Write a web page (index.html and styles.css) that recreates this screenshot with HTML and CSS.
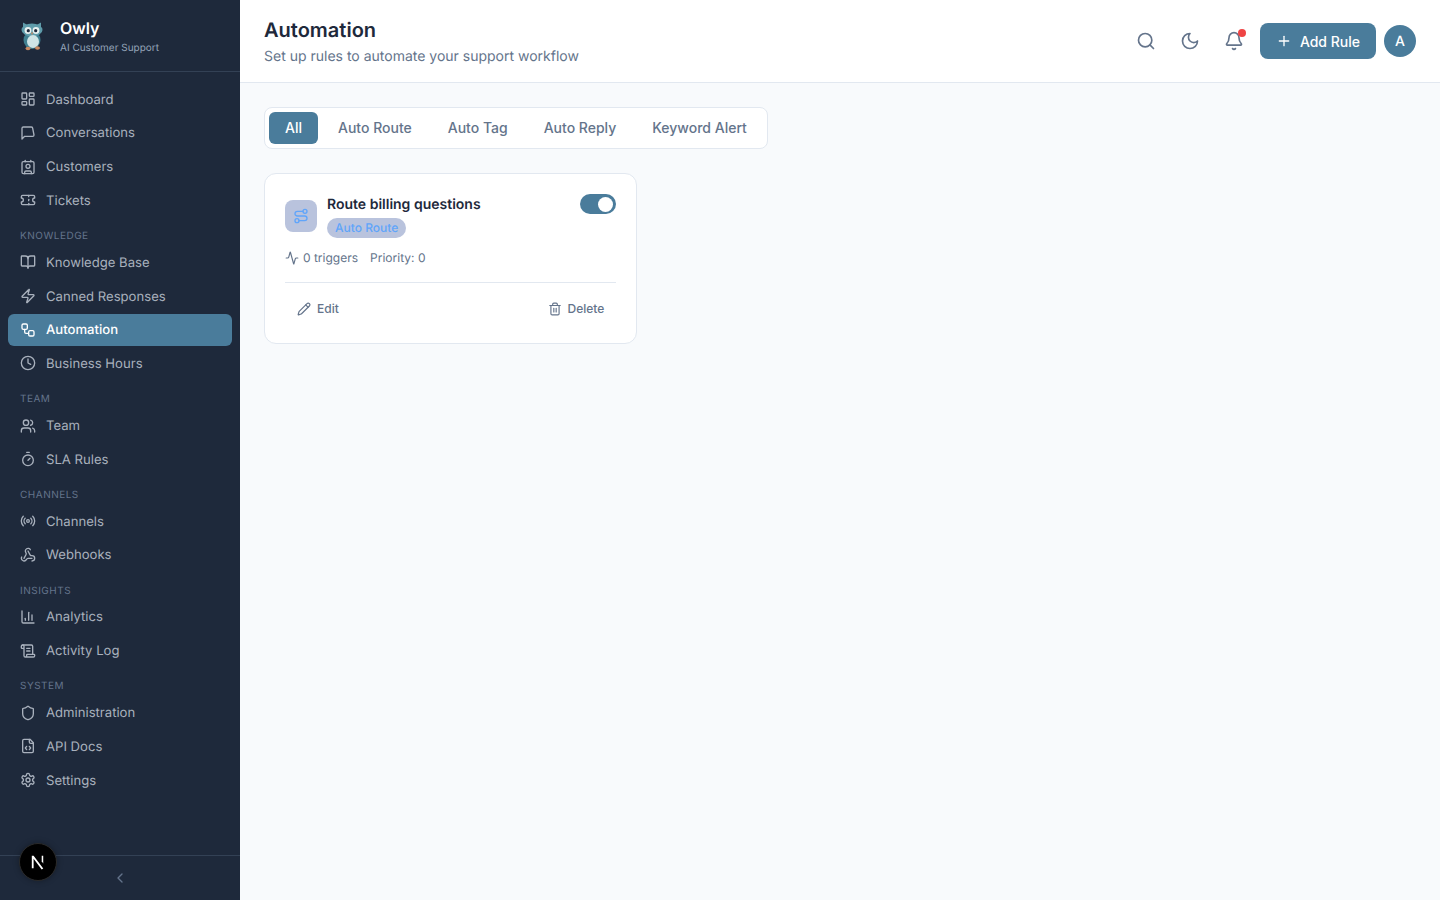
FILE: index.html
```html
<!DOCTYPE html>
<html lang="en">
<head>
<meta charset="utf-8">
<title>Automation - Owly</title>
<link rel="stylesheet" href="styles.css">
</head>
<body>
<svg class="sprite" xmlns="http://www.w3.org/2000/svg">
<symbol id="i-dashboard" viewBox="0 0 24 24"><rect width="7" height="9" x="3" y="3" rx="1"/><rect width="7" height="5" x="14" y="3" rx="1"/><rect width="7" height="9" x="14" y="12" rx="1"/><rect width="7" height="5" x="3" y="16" rx="1"/></symbol>
<symbol id="i-message" viewBox="0 0 24 24"><path d="M21 15a2 2 0 0 1-2 2H7l-4 4V5a2 2 0 0 1 2-2h12a2 2 0 0 1 2 2z"/></symbol>
<symbol id="i-contact" viewBox="0 0 24 24"><path d="M16 2v2"/><path d="M7 22v-2a2 2 0 0 1 2-2h6a2 2 0 0 1 2 2v2"/><path d="M8 2v2"/><circle cx="12" cy="11" r="3"/><rect x="3" y="4" width="18" height="18" rx="2"/></symbol>
<symbol id="i-ticket" viewBox="0 0 24 24"><path d="M2 9a3 3 0 0 1 0 6v2a2 2 0 0 0 2 2h16a2 2 0 0 0 2-2v-2a3 3 0 0 1 0-6V7a2 2 0 0 0-2-2H4a2 2 0 0 0-2 2Z"/><path d="M13 5v2"/><path d="M13 17v2"/><path d="M13 11v2"/></symbol>
<symbol id="i-book" viewBox="0 0 24 24"><path d="M12 7v14"/><path d="M3 18a1 1 0 0 1-1-1V4a1 1 0 0 1 1-1h5a4 4 0 0 1 4 4 4 4 0 0 1 4-4h5a1 1 0 0 1 1 1v13a1 1 0 0 1-1 1h-6a3 3 0 0 0-3 3 3 3 0 0 0-3-3z"/></symbol>
<symbol id="i-zap" viewBox="0 0 24 24"><path d="M4 14a1 1 0 0 1-.78-1.63l9.9-10.2a.5.5 0 0 1 .86.46l-1.92 6.02A1 1 0 0 0 13 10h7a1 1 0 0 1 .78 1.63l-9.9 10.2a.5.5 0 0 1-.86-.46l1.92-6.02A1 1 0 0 0 11 14z"/></symbol>
<symbol id="i-workflow" viewBox="0 0 24 24"><rect width="8" height="8" x="3" y="3" rx="2"/><path d="M7 11v4a2 2 0 0 0 2 2h4"/><rect width="8" height="8" x="13" y="13" rx="2"/></symbol>
<symbol id="i-clock" viewBox="0 0 24 24"><circle cx="12" cy="12" r="10"/><polyline points="12 6 12 12 16 14"/></symbol>
<symbol id="i-users" viewBox="0 0 24 24"><path d="M16 21v-2a4 4 0 0 0-4-4H6a4 4 0 0 0-4 4v2"/><circle cx="9" cy="7" r="4"/><path d="M22 21v-2a4 4 0 0 0-3-3.87"/><path d="M16 3.13a4 4 0 0 1 0 7.75"/></symbol>
<symbol id="i-timer" viewBox="0 0 24 24"><line x1="10" x2="14" y1="2" y2="2"/><line x1="12" x2="15" y1="14" y2="11"/><circle cx="12" cy="14" r="8"/></symbol>
<symbol id="i-radio" viewBox="0 0 24 24"><path d="M4.9 19.1C1 15.2 1 8.8 4.9 4.9"/><path d="M7.8 16.2c-2.3-2.3-2.3-6.1 0-8.5"/><circle cx="12" cy="12" r="2"/><path d="M16.2 7.8c2.3 2.3 2.3 6.1 0 8.5"/><path d="M19.1 4.9C23 8.8 23 15.1 19.1 19"/></symbol>
<symbol id="i-webhook" viewBox="0 0 24 24"><path d="M18 16.98h-5.99c-1.1 0-1.95.94-2.48 1.9A4 4 0 0 1 2 17c.01-.7.2-1.4.57-2"/><path d="m6 17 3.13-5.78c.53-.97.1-2.18-.5-3.1a4 4 0 1 1 6.89-4.06"/><path d="m12 6 3.13 5.73C15.66 12.7 16.9 13 18 13a4 4 0 0 1 0 8"/></symbol>
<symbol id="i-chart" viewBox="0 0 24 24"><path d="M3 3v16a2 2 0 0 0 2 2h16"/><path d="M18 17V9"/><path d="M13 17V5"/><path d="M8 17v-3"/></symbol>
<symbol id="i-scroll" viewBox="0 0 24 24"><path d="M15 12h-5"/><path d="M15 8h-5"/><path d="M19 17V5a2 2 0 0 0-2-2H4"/><path d="M8 21h12a2 2 0 0 0 2-2v-1a1 1 0 0 0-1-1H11a1 1 0 0 0-1 1v1a2 2 0 1 1-4 0V5a2 2 0 1 0-4 0v2a1 1 0 0 0 1 1h3"/></symbol>
<symbol id="i-shield" viewBox="0 0 24 24"><path d="M20 13c0 5-3.5 7.5-7.66 8.95a1 1 0 0 1-.67-.01C7.5 20.5 4 18 4 13V6a1 1 0 0 1 1-1c2 0 4.5-1.2 6.24-2.72a1.17 1.17 0 0 1 1.52 0C14.51 3.81 17 5 19 5a1 1 0 0 1 1 1z"/></symbol>
<symbol id="i-filecode" viewBox="0 0 24 24"><path d="M10 12.5 8 15l2 2.5"/><path d="m14 12.5 2 2.5-2 2.5"/><path d="M14 2v4a2 2 0 0 0 2 2h4"/><path d="M15 2H6a2 2 0 0 0-2 2v16a2 2 0 0 0 2 2h12a2 2 0 0 0 2-2V7z"/></symbol>
<symbol id="i-settings" viewBox="0 0 24 24"><path d="M12.22 2h-.44a2 2 0 0 0-2 2v.18a2 2 0 0 1-1 1.73l-.43.25a2 2 0 0 1-2 0l-.15-.08a2 2 0 0 0-2.73.73l-.22.38a2 2 0 0 0 .73 2.73l.15.1a2 2 0 0 1 1 1.72v.51a2 2 0 0 1-1 1.74l-.15.09a2 2 0 0 0-.73 2.73l.22.38a2 2 0 0 0 2.73.73l.15-.08a2 2 0 0 1 2 0l.43.25a2 2 0 0 1 1 1.73V20a2 2 0 0 0 2 2h.44a2 2 0 0 0 2-2v-.18a2 2 0 0 1 1-1.73l.43-.25a2 2 0 0 1 2 0l.15.08a2 2 0 0 0 2.73-.73l.22-.39a2 2 0 0 0-.73-2.73l-.15-.08a2 2 0 0 1-1-1.74v-.5a2 2 0 0 1 1-1.74l.15-.09a2 2 0 0 0 .73-2.73l-.22-.38a2 2 0 0 0-2.73-.73l-.15.08a2 2 0 0 1-2 0l-.43-.25a2 2 0 0 1-1-1.73V4a2 2 0 0 0-2-2z"/><circle cx="12" cy="12" r="3"/></symbol>
<symbol id="i-search" viewBox="0 0 24 24"><circle cx="11" cy="11" r="8"/><path d="m21 21-4.3-4.3"/></symbol>
<symbol id="i-moon" viewBox="0 0 24 24"><path d="M12 3a6 6 0 0 0 9 9 9 9 0 1 1-9-9Z"/></symbol>
<symbol id="i-bell" viewBox="0 0 24 24"><path d="M10.268 21a2 2 0 0 0 3.464 0"/><path d="M3.262 15.326A1 1 0 0 0 4 17h16a1 1 0 0 0 .74-1.673C19.41 13.956 18 12.499 18 8A6 6 0 0 0 6 8c0 4.499-1.411 5.956-2.738 7.326"/></symbol>
<symbol id="i-plus" viewBox="0 0 24 24"><path d="M5 12h14"/><path d="M12 5v14"/></symbol>
<symbol id="i-route" viewBox="0 0 24 24"><circle cx="6" cy="19" r="3"/><path d="M9 19h8.5a3.5 3.5 0 0 0 0-7h-11a3.5 3.5 0 0 1 0-7H15"/><circle cx="18" cy="5" r="3"/></symbol>
<symbol id="i-activity" viewBox="0 0 24 24"><path d="M22 12h-2.48a2 2 0 0 0-1.93 1.46l-2.35 8.36a.25.25 0 0 1-.48 0L9.24 2.18a.25.25 0 0 0-.48 0l-2.35 8.36A2 2 0 0 1 4.49 12H2"/></symbol>
<symbol id="i-pencil" viewBox="0 0 24 24"><path d="M21.174 6.812a1 1 0 0 0-3.986-3.987L3.842 16.174a2 2 0 0 0-.5.83l-1.321 4.352a.5.5 0 0 0 .623.622l4.353-1.32a2 2 0 0 0 .83-.497z"/><path d="m15 5 4 4"/></symbol>
<symbol id="i-trash" viewBox="0 0 24 24"><path d="M3 6h18"/><path d="M19 6v14c0 1-1 2-2 2H7c-1 0-2-1-2-2V6"/><path d="M8 6V4c0-1 1-2 2-2h4c1 0 2 1 2 2v2"/><line x1="10" x2="10" y1="11" y2="17"/><line x1="14" x2="14" y1="11" y2="17"/></symbol>
<symbol id="i-chevron" viewBox="0 0 24 24"><path d="m15 18-6-6 6-6"/></symbol>
</svg>
<div class="app">
  <aside class="sidebar">
    <div class="brand">
      <svg class="owl" viewBox="0 0 24 30" aria-hidden="true">
        <path class="owl-ear" d="M3 8 3 1.500 7.500 4h9L21 1.500 21 8Z"/>
        <ellipse class="owl-body" cx="12" cy="19" rx="8.500" ry="9"/>
        <ellipse class="owl-head" cx="12" cy="9" rx="10.500" ry="6.500"/>
        <ellipse class="owl-belly" cx="13" cy="20.500" rx="6" ry="6.500"/>
        <circle class="owl-eye" cx="8" cy="9.500" r="3.400"/>
        <circle class="owl-eye" cx="16" cy="9.500" r="3.400"/>
        <circle class="owl-pupil" cx="8.300" cy="9.700" r="1.600"/>
        <circle class="owl-pupil" cx="15.700" cy="9.700" r="1.600"/>
        <path class="owl-foot" d="M11 11.500h2.200L12 14.300Z"/>
        <ellipse class="owl-foot" cx="8" cy="27.500" rx="2.500" ry="1.800"/>
        <ellipse class="owl-foot" cx="17.500" cy="27" rx="2.500" ry="1.800"/>
      </svg>
      <div class="brand-text">
        <div class="brand-name">Owly</div>
        <div class="brand-sub">AI Customer Support</div>
      </div>
    </div>
    <nav class="nav">
      <a class="nav-item"><svg class="ico"><use href="#i-dashboard"/></svg>Dashboard</a>
      <a class="nav-item"><svg class="ico"><use href="#i-message"/></svg>Conversations</a>
      <a class="nav-item"><svg class="ico"><use href="#i-contact"/></svg>Customers</a>
      <a class="nav-item"><svg class="ico"><use href="#i-ticket"/></svg>Tickets</a>
      <div class="nav-label">Knowledge</div>
      <a class="nav-item"><svg class="ico"><use href="#i-book"/></svg>Knowledge Base</a>
      <a class="nav-item"><svg class="ico"><use href="#i-zap"/></svg>Canned Responses</a>
      <a class="nav-item active"><svg class="ico"><use href="#i-workflow"/></svg>Automation</a>
      <a class="nav-item"><svg class="ico"><use href="#i-clock"/></svg>Business Hours</a>
      <div class="nav-label">Team</div>
      <a class="nav-item"><svg class="ico"><use href="#i-users"/></svg>Team</a>
      <a class="nav-item"><svg class="ico"><use href="#i-timer"/></svg>SLA Rules</a>
      <div class="nav-label">Channels</div>
      <a class="nav-item"><svg class="ico"><use href="#i-radio"/></svg>Channels</a>
      <a class="nav-item"><svg class="ico"><use href="#i-webhook"/></svg>Webhooks</a>
      <div class="nav-label">Insights</div>
      <a class="nav-item"><svg class="ico"><use href="#i-chart"/></svg>Analytics</a>
      <a class="nav-item"><svg class="ico"><use href="#i-scroll"/></svg>Activity Log</a>
      <div class="nav-label">System</div>
      <a class="nav-item"><svg class="ico"><use href="#i-shield"/></svg>Administration</a>
      <a class="nav-item"><svg class="ico"><use href="#i-filecode"/></svg>API Docs</a>
      <a class="nav-item"><svg class="ico"><use href="#i-settings"/></svg>Settings</a>
    </nav>
    <div class="side-foot"><svg class="ico"><use href="#i-chevron"/></svg></div>
    <div class="next-badge">
      <svg viewBox="0 0 16 16" class="next-mark" aria-hidden="true">
        <path class="next-n" d="M3.500 12.500V3.500h1.300l7 9.200-1.100.8L4.800 5.700v6.800Z"/>
        <path class="next-i" d="M10.700 3.500h1.100v5.500l-1.100-1.500Z"/>
      </svg>
    </div>
  </aside>
  <main class="main">
    <header class="topbar">
      <div class="heading">
        <h1>Automation</h1>
        <p>Set up rules to automate your support workflow</p>
      </div>
      <div class="actions">
        <button class="icon-btn"><svg class="ico-lg"><use href="#i-search"/></svg></button>
        <button class="icon-btn"><svg class="ico-lg"><use href="#i-moon"/></svg></button>
        <button class="icon-btn"><svg class="ico-lg"><use href="#i-bell"/></svg><span class="dot"></span></button>
        <button class="primary"><svg class="ico"><use href="#i-plus"/></svg>Add Rule</button>
        <div class="avatar">A</div>
      </div>
    </header>
    <section class="content">
      <div class="tabs">
        <button class="tab on">All</button>
        <button class="tab">Auto Route</button>
        <button class="tab">Auto Tag</button>
        <button class="tab">Auto Reply</button>
        <button class="tab">Keyword Alert</button>
      </div>
      <div class="cards">
        <article class="card">
          <div class="card-top">
            <div class="card-head">
              <div class="rule-icon"><svg class="ico"><use href="#i-route"/></svg></div>
              <div class="rule-titles">
                <h3>Route billing questions</h3>
                <span class="chip">Auto Route</span>
              </div>
            </div>
            <div class="toggle"><span class="knob"></span></div>
          </div>
          <div class="stats">
            <span class="stat"><svg class="ico-sm"><use href="#i-activity"/></svg>0 triggers</span>
            <span class="stat">Priority: 0</span>
          </div>
          <div class="card-actions">
            <button class="ghost"><svg class="ico-sm"><use href="#i-pencil"/></svg>Edit</button>
            <button class="ghost"><svg class="ico-sm"><use href="#i-trash"/></svg>Delete</button>
          </div>
        </article>
      </div>
    </section>
  </main>
</div>
</body>
</html>
```

FILE: styles.css
```css
* { box-sizing: border-box; }
html, body { margin: 0; height: 100%; }
body { font-family: Inter, "Liberation Sans", sans-serif; background: #f8fafc; color: #1e293b; overflow: hidden; text-rendering: geometricPrecision; }
.sprite { position: absolute; width: 0; height: 0; overflow: hidden; }
.ico, .ico-lg, .ico-sm { fill: none; stroke: currentColor; stroke-width: 2; stroke-linecap: round; stroke-linejoin: round; flex: none; }
.ico { width: 16px; height: 16px; }
.ico-lg { width: 20px; height: 20px; }
.ico-sm { width: 14px; height: 14px; }

.app { display: flex; height: 900px; }

.sidebar { position: relative; width: 240px; flex: none; background: #1e293b; color: #a9b1bd; display: flex; flex-direction: column; }
.brand { height: 72px; flex: none; border-bottom: 1px solid #334155; padding: 0 20px; display: flex; align-items: center; gap: 16px; }
.owl { width: 24px; height: 30px; flex: none; margin-top: 1px; }
.owl-ear, .owl-head { fill: #5f9cab; }
.owl-body { fill: #3f7f90; }
.owl-belly { fill: #cfe4e6; }
.owl-eye { fill: #e8f0f0; }
.owl-pupil { fill: #1e293b; }
.owl-foot { fill: #c98a63; }
.brand-text { margin-top: 4px; }
.brand-name { font-size: 16px; line-height: 20px; font-weight: 600; color: #fff; }
.brand-sub { font-size: 10px; line-height: 17px; margin-top: 2px; color: #94a3b8; }

.nav { flex: 1; padding: 11.5px 8px 0; display: flex; flex-direction: column; gap: 2px; }
.nav-item { flex: none; display: flex; align-items: center; gap: 10px; padding: 7.3px 12px 4.7px; border-radius: 6px; font-size: 13.12px; line-height: 1.5; color: #a9b1bd; }
.nav-item .ico { margin-top: -2.6px; }
.nav-item.active { background: #4a7c9b; color: #fff; font-weight: 500; }
.nav-label { height: 26.42px; flex: none; padding: 9.9px 12px 0; font-size: 10px; line-height: 16px; letter-spacing: 0.5px; text-transform: uppercase; color: #64748b; }

.side-foot { height: 45px; flex: none; border-top: 1px solid #334155; display: flex; align-items: center; justify-content: center; color: #64748b; }
.next-badge { position: absolute; left: 19px; top: 843px; width: 38px; height: 38px; border-radius: 50%; background: #000; border: 1px solid #2a2a2a; box-shadow: 0 0 6px rgba(0,0,0,.3); display: flex; align-items: center; justify-content: center; }
.next-mark { width: 22px; height: 22px; }
.next-n, .next-i { fill: #fff; }

.main { flex: 1; min-width: 0; display: flex; flex-direction: column; }
.topbar { height: 83px; flex: none; background: #fff; border-bottom: 1px solid #e2e8f0; padding: 0 24px; display: flex; align-items: center; justify-content: space-between; }
.heading { padding-top: 1px; }
.heading h1 { margin: 0; font-size: 20px; line-height: 28px; font-weight: 600; color: #1e293b; }
.heading p { margin: 3px 0 0; font-size: 14px; line-height: 20px; color: #64748b; }
.actions { display: flex; align-items: center; gap: 8px; }
button { font-family: inherit; border: 0; background: none; cursor: pointer; padding: 0; }
.icon-btn { position: relative; width: 36px; height: 36px; display: flex; align-items: center; justify-content: center; color: #64748b; border-radius: 8px; }
.dot { position: absolute; top: 6px; right: 6px; width: 8px; height: 8px; border-radius: 50%; background: #ef4444; }
.primary { height: 36px; padding: 0 16px; display: flex; align-items: center; gap: 8px; border-radius: 8px; background: #4a7c9b; color: #fff; font-size: 14px; font-weight: 500; }
.avatar { width: 32px; height: 32px; border-radius: 50%; background: #4a7c9b; color: #fff; font-size: 14px; font-weight: 500; display: flex; align-items: center; justify-content: center; }

.content { flex: 1; padding: 24px; display: flex; flex-direction: column; align-items: flex-start; gap: 24px; }
.tabs { display: flex; gap: 4px; padding: 4px; background: #fff; border: 1px solid #e2e8f0; border-radius: 8px; }
.tab { height: 32px; padding: 0 16px 1px; border-radius: 6px; font-size: 14px; font-weight: 500; color: #64748b; }
.tab.on { background: #4a7c9b; color: #fff; }

.cards { width: 100%; display: grid; grid-template-columns: repeat(3, 1fr); gap: 16px; }
.card { background: #fff; border: 1px solid #e2e8f0; border-radius: 12px; padding: 20px; }
.card-top { display: flex; justify-content: space-between; align-items: flex-start; }
.card-head { display: flex; align-items: center; gap: 10px; }
.rule-icon { width: 32px; height: 32px; border-radius: 8px; background: #b9c3dd; color: #60a5fa; display: flex; align-items: center; justify-content: center; }
.rule-titles { display: flex; flex-direction: column; align-items: flex-start; gap: 3px; }
.rule-titles h3 { margin: 0; padding-top: 1px; font-size: 14px; line-height: 20px; font-weight: 600; color: #1e293b; }
.chip { height: 20px; padding: 0 8px; border-radius: 10px; background: #b9c3dd; color: #60a5fa; font-size: 12px; line-height: 20px; font-weight: 500; }
.toggle { width: 36px; height: 20px; border-radius: 10px; background: #4a7c9b; padding: 2.5px 3.3px; display: flex; justify-content: flex-end; }
.knob { width: 15px; height: 15px; border-radius: 50%; background: #fff; }
.stats { display: flex; gap: 12px; margin-top: 12px; font-size: 12px; line-height: 16px; color: #64748b; }
.stat { display: flex; align-items: center; gap: 4px; }
.card-actions { margin-top: 16px; padding-top: 12px; border-top: 1px solid #e2e8f0; display: flex; justify-content: space-between; }
.ghost { height: 28px; padding: 0 12px 1px; display: flex; align-items: center; gap: 6px; font-size: 12px; font-weight: 500; color: #64748b; border-radius: 6px; }
.ghost .ico-sm { margin-bottom: -1px; }
```
